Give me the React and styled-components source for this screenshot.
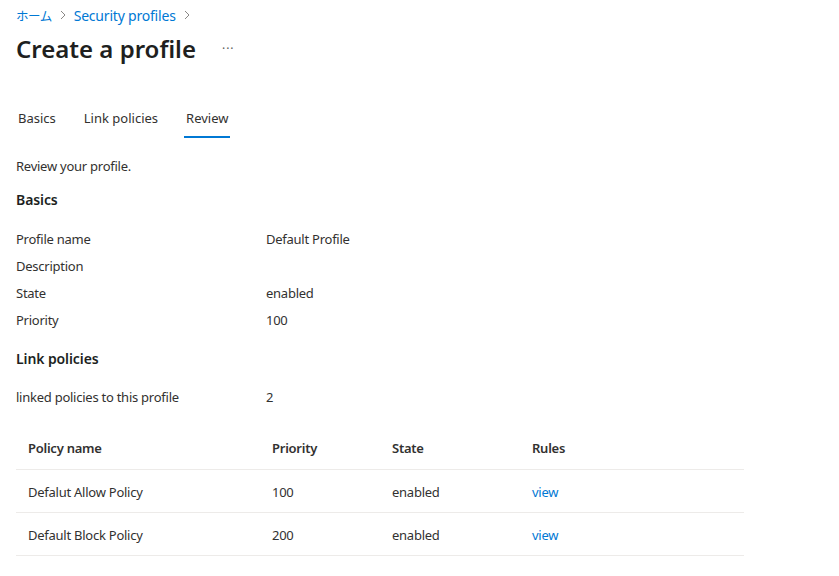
import styled, { createGlobalStyle } from 'styled-components';

const Global = createGlobalStyle`
  body {
    margin: 0;
    background: #fff;
    font-family: "Noto Sans", "Noto Sans CJK JP", sans-serif;
    color: #323130;
  }
`;

const Page = styled.div`
  padding: 5px 16px 0 16px;
  width: 728px;
`;

const Crumbs = styled.nav`
  display: flex;
  align-items: center;
  gap: 8px;
  height: 20px;
  font-size: 14px;
  letter-spacing: -0.2px;
  color: #0078d4;
`;

const Home = styled.span`
  font-size: 12.5px;
  letter-spacing: -0.5px;
`;

const Chevron = () => (
  <svg width="6" height="10" viewBox="0 0 6 10">
    <path d="M1 1 L5 5 L1 9" fill="none" stroke="#8a8886" strokeWidth="1" />
  </svg>
);

const TitleRow = styled.div`
  display: flex;
  align-items: center;
  height: 46px;
`;

const Title = styled.h1`
  margin: 0;
  font-size: 24px;
  font-weight: 600;
  color: #201f1e;
`;

const More = styled.span`
  margin-left: 26px;
  font-size: 12px;
  color: #605e5c;
  letter-spacing: 1px;
`;

const Tabs = styled.div`
  display: flex;
  margin-top: 30px;
`;

const Tab = styled.div`
  padding: 8px 2px 9px;
  margin-right: 24px;
  font-size: 13px;
  color: #323130;
  border-bottom: 2px solid ${p => (p.$active ? '#0078d4' : 'transparent')};
`;

const Intro = styled.p`
  margin: 19px 0 0;
  font-size: 13px;
  letter-spacing: -0.25px;
`;

const Heading = styled.h2`
  margin: ${p => p.$top || '15px'} 0 0;
  font-size: 14px;
  font-weight: 600;
  color: #201f1e;
  letter-spacing: -0.1px;
`;

const Fields = styled.div`
  margin-top: ${p => p.$top || '16px'};
  display: grid;
  grid-template-columns: 250px 1fr;
  grid-auto-rows: 27px;
  font-size: 13px;
  letter-spacing: -0.25px;
  align-items: center;
`;

const Table = styled.div`
  margin-top: 17px;
  font-size: 13px;
  letter-spacing: -0.25px;
`;

const Row = styled.div`
  display: grid;
  grid-template-columns: 244px 120px 140px 1fr;
  align-items: center;
  height: ${p => (p.$head ? '42px' : '43px')};
  padding-left: 12px;
  padding-top: ${p => (p.$head ? '0' : '2px')};
  box-sizing: ${p => (p.$head ? 'content-box' : 'border-box')};
  border-bottom: 1px solid #edebe9;
  font-weight: ${p => (p.$head ? 600 : 400)};
`;

const Link = styled.span`
  color: #0078d4;
`;

const policies = [
  { name: 'Defalut Allow Policy', priority: 100, state: 'enabled' },
  { name: 'Default Block Policy', priority: 200, state: 'enabled' },
];

export default function App() {
  return (
    <Page>
      <Global />
      <Crumbs>
        <Home>ホーム</Home>
        <Chevron />
        <span>Security profiles</span>
        <Chevron />
      </Crumbs>
      <TitleRow>
        <Title>Create a profile</Title>
        <More>···</More>
      </TitleRow>
      <Tabs>
        <Tab>Basics</Tab>
        <Tab>Link policies</Tab>
        <Tab $active>Review</Tab>
      </Tabs>
      <Intro>Review your profile.</Intro>
      <Heading>Basics</Heading>
      <Fields $top="16px">
        <span>Profile name</span><span>Default Profile</span>
        <span>Description</span><span></span>
        <span>State</span><span>enabled</span>
        <span>Priority</span><span>100</span>
      </Fields>
      <Heading $top="16px">Link policies</Heading>
      <Fields $top="15px">
        <span>linked policies to this profile</span><span>2</span>
      </Fields>
      <Table>
        <Row $head>
          <span>Policy name</span>
          <span>Priority</span>
          <span>State</span>
          <span>Rules</span>
        </Row>
        {policies.map(p => (
          <Row key={p.name}>
            <span>{p.name}</span>
            <span>{p.priority}</span>
            <span>{p.state}</span>
            <Link>view</Link>
          </Row>
        ))}
      </Table>
    </Page>
  );
}
